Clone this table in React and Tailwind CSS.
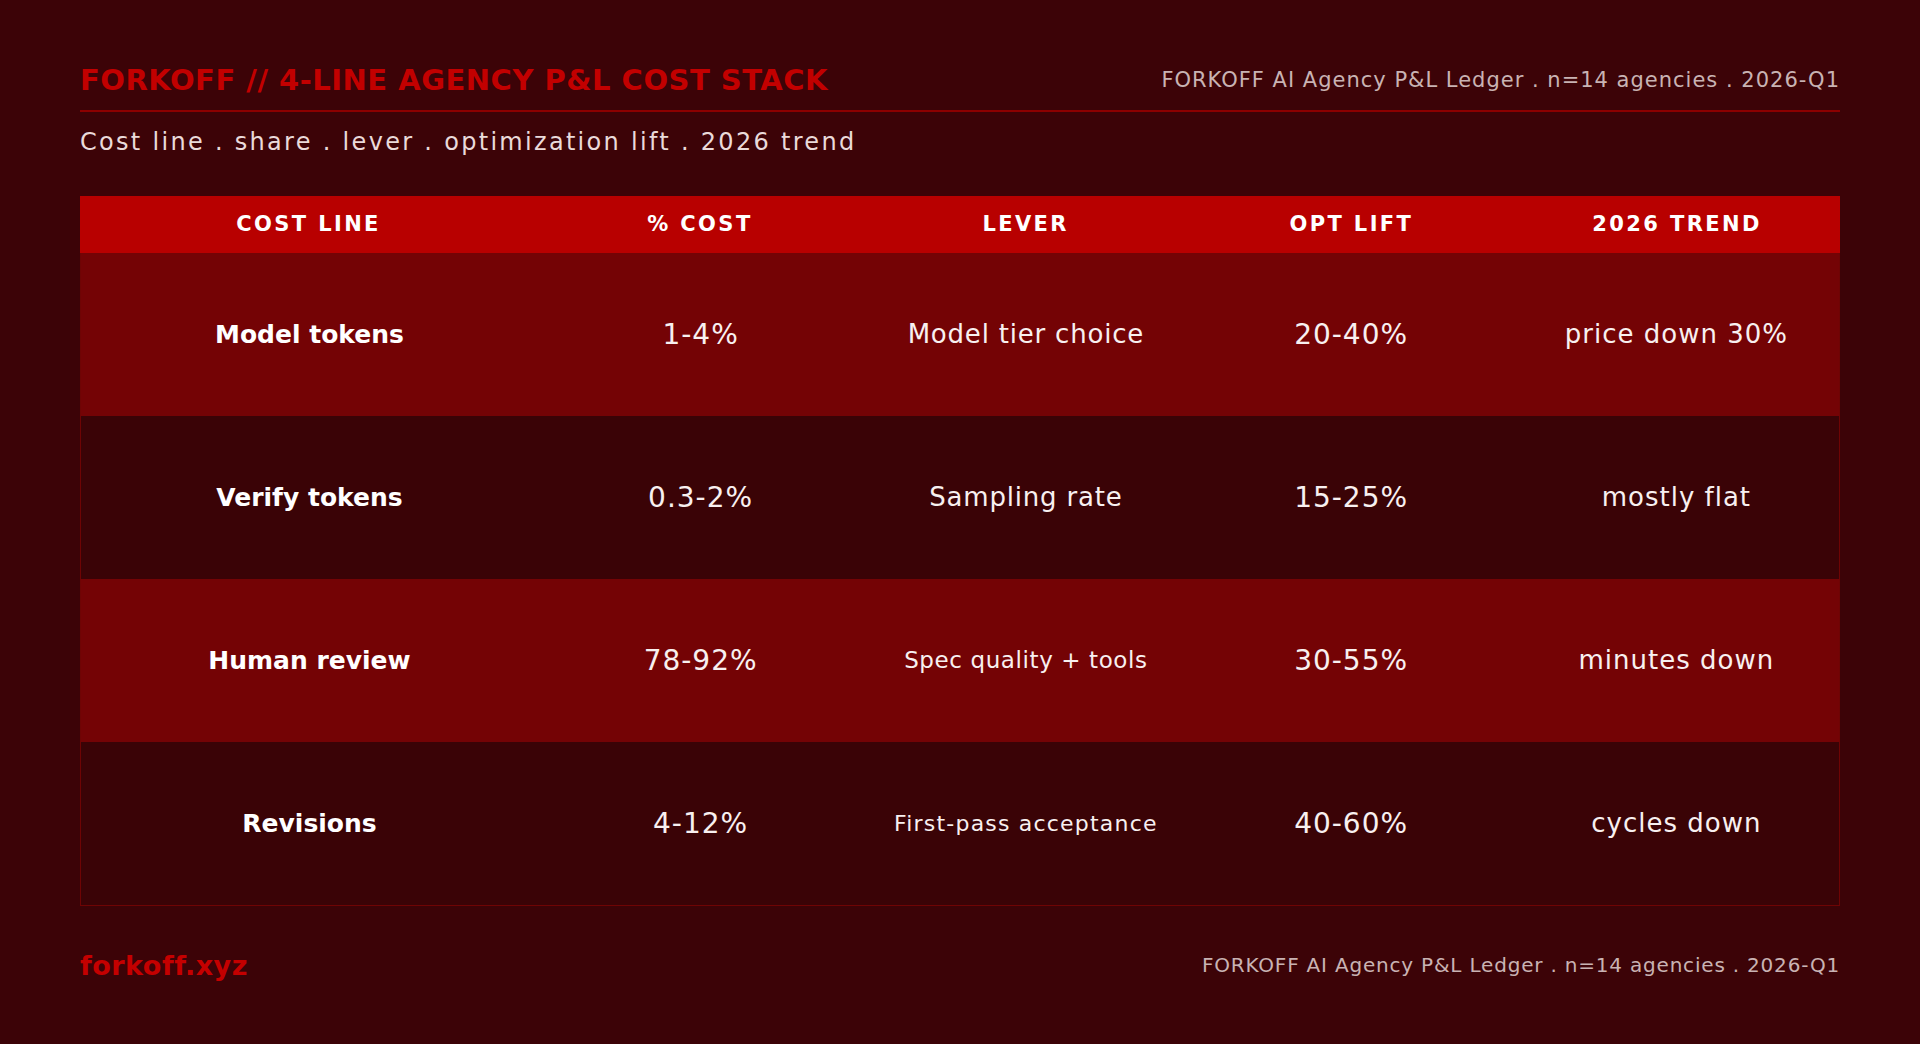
import React from 'react';

const rows = [
  { line: 'Model tokens', share: '1-4%', lever: 'Model tier choice', leverSize: 'text-[26px] tracking-[0.8px]', lift: '20-40%', trend: 'price down 30%' },
  { line: 'Verify tokens', share: '0.3-2%', lever: 'Sampling rate', leverSize: 'text-[26px] tracking-[0.8px]', lift: '15-25%', trend: 'mostly flat' },
  { line: 'Human review', share: '78-92%', lever: 'Spec quality + tools', leverSize: 'text-[23px] tracking-[0.6px]', lift: '30-55%', trend: 'minutes down' },
  { line: 'Revisions', share: '4-12%', lever: 'First-pass acceptance', leverSize: 'text-[22px] tracking-[1.2px]', lift: '40-60%', trend: 'cycles down' },
];

const heads = ['COST LINE', '% COST', 'LEVER', 'OPT LIFT', '2026 TREND'];

const font = "font-['DejaVu_Sans','Noto_Sans',sans-serif]";

export default function App() {
  return (
    <div className={`min-h-screen bg-[#3c0307] px-[80px] pt-[61px] ${font}`}>
      {/* header */}
      <div className="flex items-center justify-between h-[38px] mb-[11px]">
        <h1 className="text-[29px] font-bold text-[#c20000] tracking-[0.5px] leading-none">
          FORKOFF // 4-LINE AGENCY P&amp;L COST STACK
        </h1>
        <p className="text-[21px] text-[#c9b3b3] tracking-[1px] leading-none">
          FORKOFF AI Agency P&amp;L Ledger . n=14 agencies . 2026-Q1
        </p>
      </div>
      <div className="h-[2px] bg-[#8c0000]" />
      <p className="mt-[14px] h-[32px] leading-[32px] text-[24px] text-[#eadada] tracking-[2.3px]">
        Cost line . share . lever . optimization lift . 2026 trend
      </p>

      {/* table */}
      <div className="mt-[38px] border border-[#6e0404]">
        <div className="grid grid-cols-[457px_1fr_1fr_1fr_1fr] h-[57px] bg-[#b80000] -mx-px -mt-px">
          {heads.map((h) => (
            <div key={h} className="flex items-center justify-center text-[21px] font-bold text-white tracking-[2.4px]">
              {h}
            </div>
          ))}
        </div>
        {rows.map((r, i) => (
          <div
            key={r.line}
            className={`grid grid-cols-[457px_1fr_1fr_1fr_1fr] h-[163px] text-[#f8f0f0] ${i % 2 === 0 ? 'bg-[#740305]' : 'bg-[#3a0306]'}`}
          >
            <div className="flex items-center justify-center text-[25px] font-bold text-white">{r.line}</div>
            <div className="flex items-center justify-center text-[28px] tracking-[1px]">{r.share}</div>
            <div className={`flex items-center justify-center ${r.leverSize}`}>{r.lever}</div>
            <div className="flex items-center justify-center text-[28px] tracking-[1px]">{r.lift}</div>
            <div className="flex items-center justify-center text-[26px] tracking-[1px]">{r.trend}</div>
          </div>
        ))}
      </div>

      {/* footer */}
      <div className="mt-[43px] flex items-center justify-between h-[32px]">
        <span className="text-[27px] font-bold text-[#c40000] tracking-[0.5px] leading-none">forkoff.xyz</span>
        <span className="text-[20px] text-[#c9b3b3] tracking-[0.8px] leading-none">
          FORKOFF AI Agency P&amp;L Ledger . n=14 agencies . 2026-Q1
        </span>
      </div>
    </div>
  );
}
